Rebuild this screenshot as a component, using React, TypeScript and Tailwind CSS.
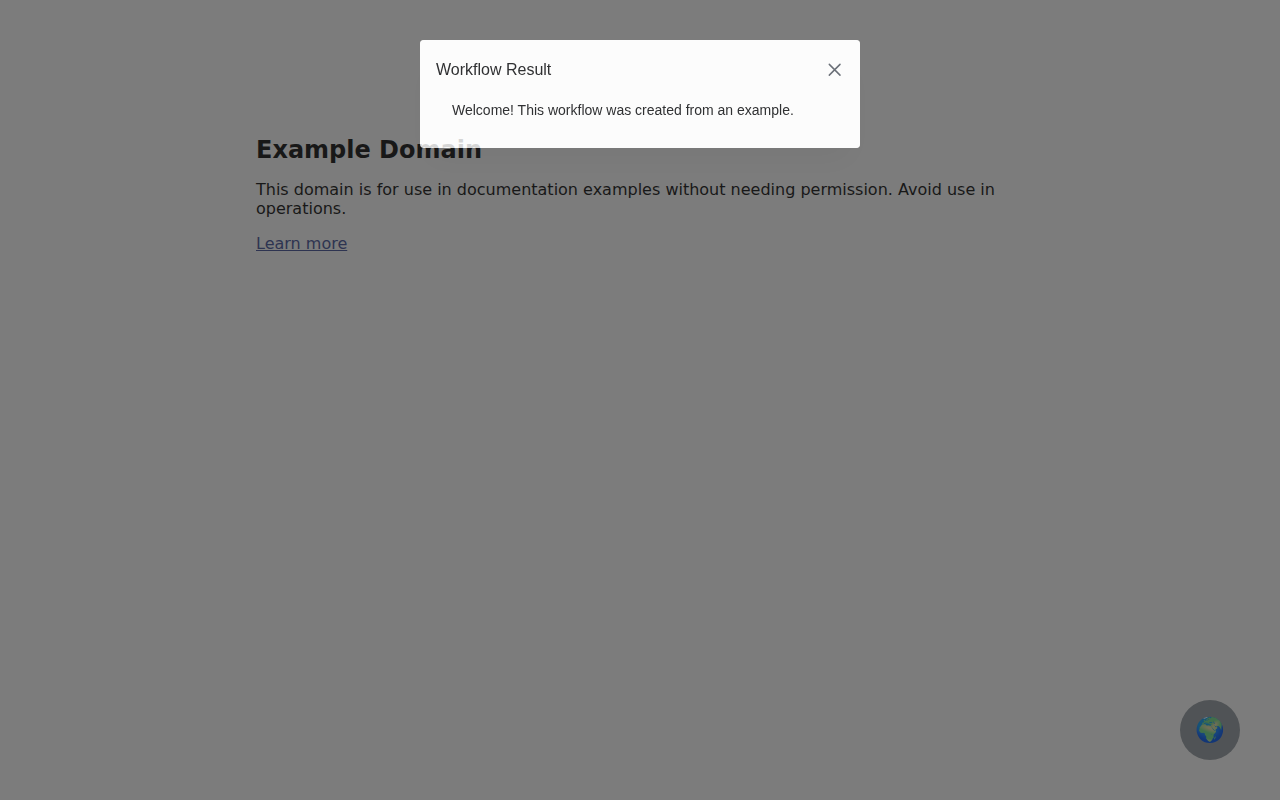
import { useState } from "react";

function ResultDialog({ onClose }: { onClose: () => void }) {
  return (
    <div className="fixed inset-0 z-10 flex items-start justify-center overflow-hidden pt-10">
      <section
        role="dialog"
        aria-modal="true"
        aria-labelledby="dialog-title"
        className="w-110 rounded-[4px] bg-white/80 px-4 pt-4 pb-3 font-['Liberation_Sans',sans-serif] text-[#303133] shadow-[0_20px_32px_-8px_rgba(0,0,0,0.04),0_0_0_3000px_rgba(0,0,0,0.48)]"
      >
        <header className="flex h-7 items-center justify-between">
          <h2 id="dialog-title" className="text-base">
            Workflow Result
          </h2>
          <button
            type="button"
            aria-label="Close"
            onClick={onClose}
            className="flex size-[18px] items-center justify-center text-[#6b7078]"
          >
            <svg viewBox="0 0 12 12" className="size-3 overflow-visible" fill="none" stroke="currentColor" strokeWidth="1.5" strokeLinecap="round">
              <path d="M0.3 0.4 11 11.1M11 0.4 0.3 11.1" />
            </svg>
          </button>
        </header>
        <p className="p-4 text-sm">Welcome! This workflow was created from an example.</p>
      </section>
    </div>
  );
}

export default function App() {
  const [open, setOpen] = useState(true);

  return (
    <div className="min-h-screen bg-[#eeeeee] pt-[17vh] font-['DejaVu_Sans',sans-serif] text-base leading-[19px] text-black">
      <main className="mx-auto flex w-[60vw] flex-col items-start gap-4 opacity-80">
        <h1 className="text-2xl leading-7 font-bold">Example Domain</h1>
        <p>This domain is for use in documentation examples without needing permission. Avoid use in operations.</p>
        <a href="#more" className="text-[#334488] underline">
          Learn more
        </a>
      </main>
      <button
        type="button"
        aria-label="Open workflows"
        onClick={() => setOpen(true)}
        className="fixed right-10 bottom-10 flex size-15 items-center justify-center rounded-full bg-[#9aa0a5] text-2xl"
      >
        <span className="opacity-85">🌍</span>
      </button>
      {open && <ResultDialog onClose={() => setOpen(false)} />}
    </div>
  );
}
